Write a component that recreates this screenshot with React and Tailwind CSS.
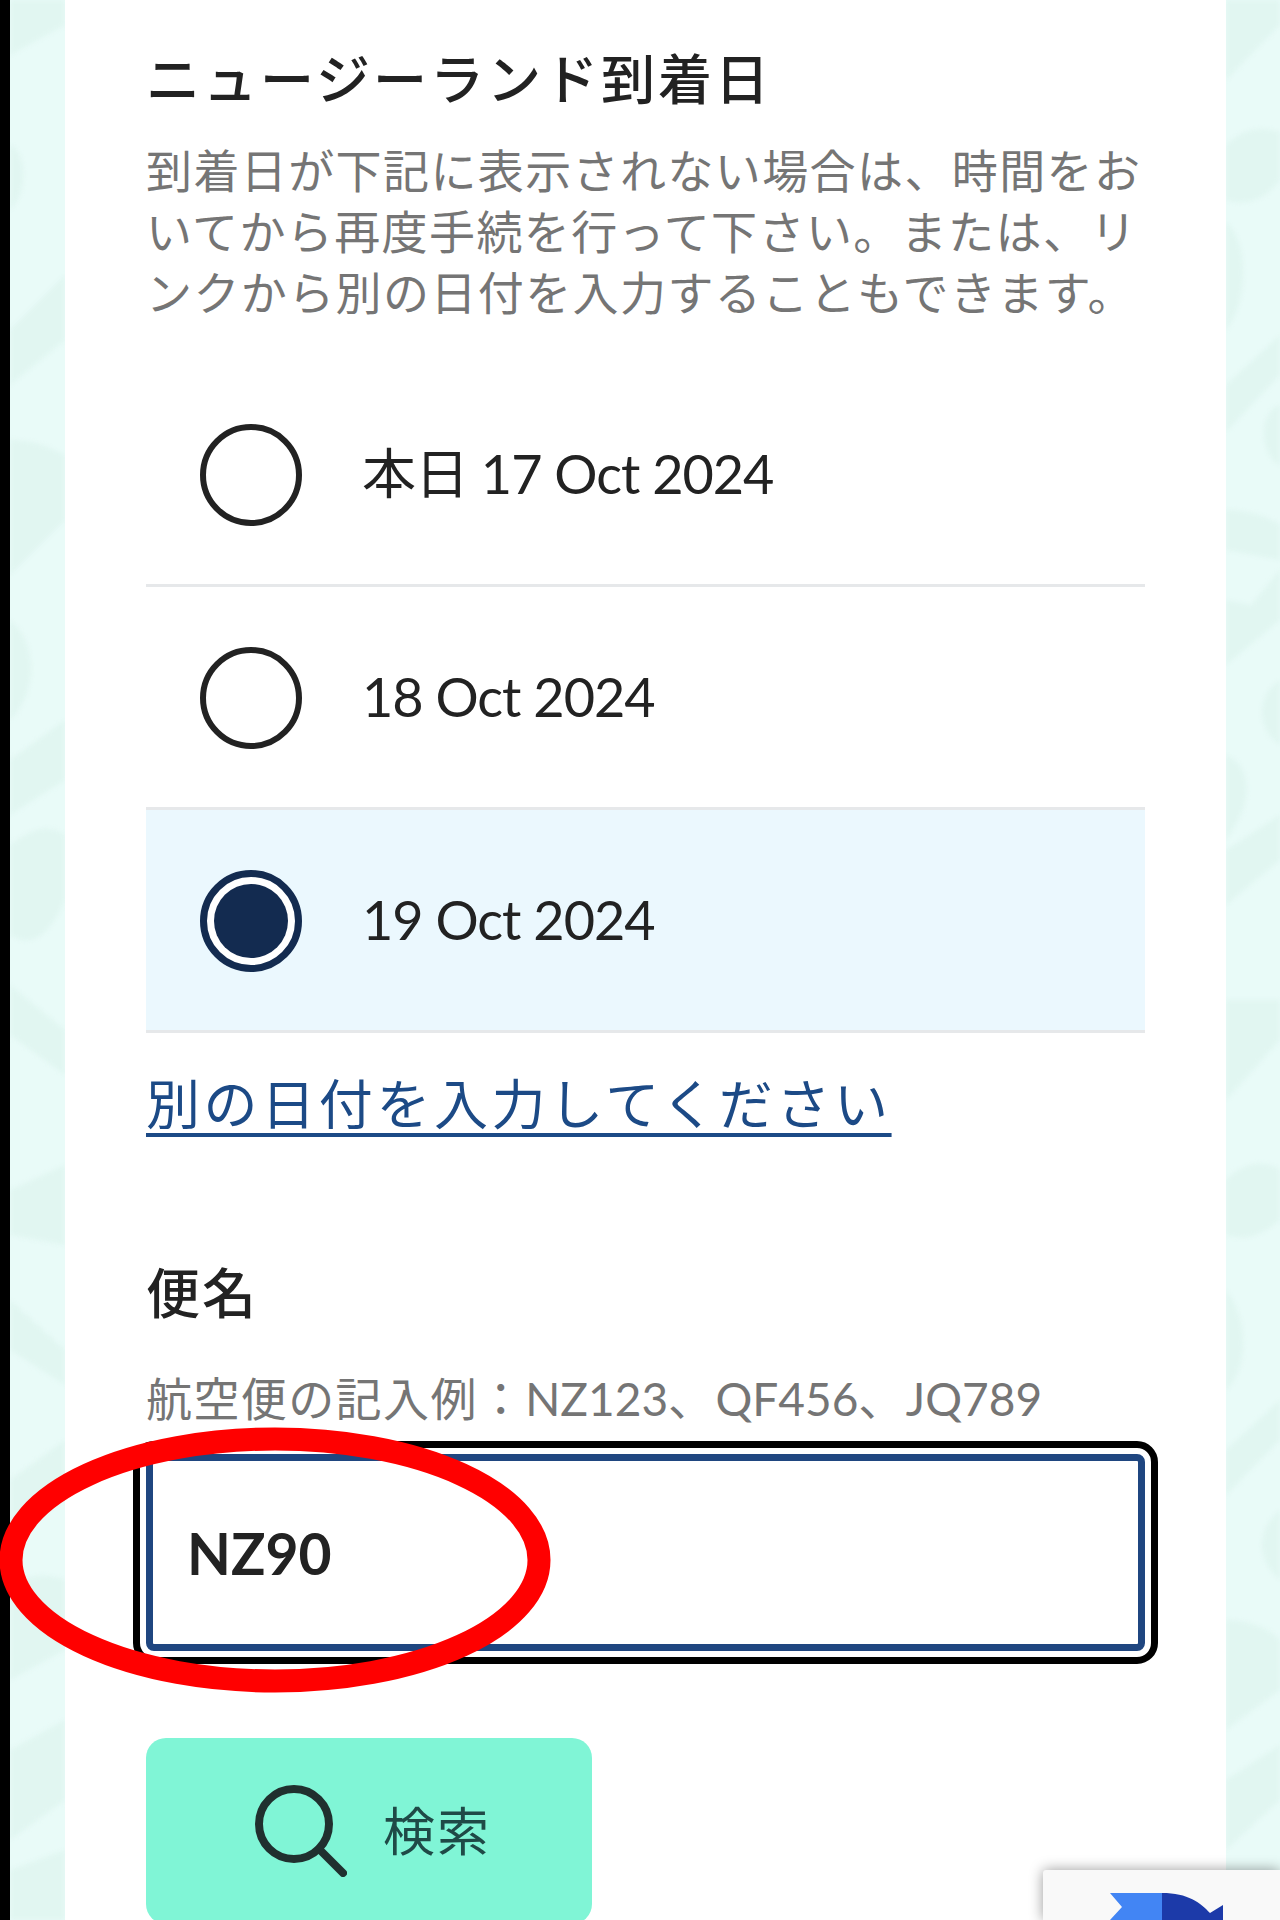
import React from 'react';

const FONT = "[font-family:Lato,'Noto_Sans_CJK_JP',sans-serif]";

const dates = [
    { id: 'today', label: '本日 17 Oct 2024' },
    { id: 'tomorrow', label: '18 Oct 2024' },
    { id: 'after', label: '19 Oct 2024', selected: true },
];

const Strip = ({ className, shapes }) => (
    <div className={`relative shrink-0 overflow-hidden bg-[#e9fbf8] ${className}`}>
        <svg className="absolute inset-0 h-full w-full blur-[2px]" viewBox="0 0 54 1920" preserveAspectRatio="none" fill="#e1f6f1">
            {shapes.map((d, i) => <path key={i} d={d} />)}
        </svg>
    </div>
);

const rightShapes = [
    'M0 0H54V25L0 80Z',
    'M0 145C20 125 40 128 54 132V180C35 205 15 205 0 200Z',
    'M0 222C22 240 24 300 0 330Z',
    'M0 385L54 335V375L0 432Z',
    'M54 405C35 410 30 450 54 466Z',
    'M0 510C25 510 45 518 54 525V570L25 605L0 600L0 665L54 620V560L0 550Z',
    'M54 680C30 695 30 730 54 745Z',
    'M0 755C25 765 30 800 0 840Z',
    'M0 850L54 815V860L0 905Z',
    'M0 1000H54V1040L0 1100Z',
    'M0 1180C20 1160 40 1160 54 1170V1220C30 1240 15 1240 0 1235Z',
    'M0 1290C24 1320 22 1370 0 1390Z',
    'M0 1450L54 1400V1440L0 1495Z',
    'M54 1510C30 1530 30 1560 54 1580Z',
    'M0 1620C25 1620 45 1630 54 1640V1690L0 1730Z',
    'M0 1780L54 1745V1800L0 1850Z',
];

const leftShapes = [
    'M0 0H54V25L0 55Z',
    'M0 145C15 150 20 190 0 210Z',
    'M0 330L54 275V340L0 385Z',
    'M0 440C20 440 35 445 54 455V520L0 575Z',
    'M0 620C25 640 30 690 0 720Z',
    'M0 760L54 720V780L0 815Z',
    'M0 845C25 825 40 825 54 835V900C35 945 15 945 0 935Z',
    'M0 985L54 1030V1075L0 1035Z',
    'M0 1190L54 1165V1245L0 1235Z',
    'M0 1300L54 1350V1385L0 1350Z',
    'M0 1480L54 1440V1500L0 1530Z',
    'M0 1590C20 1570 40 1575 54 1580V1650L0 1680Z',
    'M0 1750L54 1720V1800L0 1840Z',
    'M0 1870L54 1850V1920H0Z',
];

const Radio = ({ selected }) => selected ? (
    <span className="mt-[2px] flex h-[102px] w-[102px] shrink-0 items-center justify-center rounded-full border-[7px] border-[#132b50] bg-white">
        <span className="h-[74px] w-[74px] rounded-full bg-[#132b50]" />
    </span>
) : (
    <span className="mt-[2px] h-[102px] w-[102px] shrink-0 rounded-full border-[6px] border-[#222]" />
);

const DateRow = ({ label, selected }) => (
    <div className={`flex h-[223px] items-center gap-[60px] border-b-[3px] border-[#e6e8ea] pl-[54px] ${selected ? 'bg-[#ebf8fe]' : ''}`}>
        <Radio selected={selected} />
        <span className="text-[54px] leading-[60px] tracking-[-1px] text-[#222]">{label}</span>
    </div>
);

const App = () => {
    return (
        <div className={`relative flex h-[1920px] w-[1280px] overflow-hidden bg-white ${FONT}`}>
            <div className="w-[10px] shrink-0 bg-black" />
            <Strip className="w-[55px]" shapes={leftShapes} />

            <main className="w-[1161px] shrink-0 pl-[81px] pr-[81px] pt-[50px]">
                <h2 className="whitespace-nowrap text-[54px] font-medium leading-[60px] tracking-[3px] text-[#222]">ニュージーランド到着日</h2>
                <p className="mt-[30px] whitespace-nowrap text-[46px] leading-[61px] tracking-[1.4px] text-[#757575]">
                    到着日が下記に表示されない場合は、時間をお<br />
                    いてから再度手続を行って下さい。または、リ<br />
                    ンクから別の日付を入力することもできます。
                </p>

                <div className="mt-[41px]">
                    {dates.map(d => <DateRow key={d.id} label={d.label} selected={d.selected} />)}
                </div>

                <a className="mt-[42px] block w-fit whitespace-nowrap text-[54px] leading-[60px] tracking-[3.6px] text-[#1c4a86] underline decoration-[4px] underline-offset-[8px]">
                    別の日付を入力してください
                </a>

                <h3 className="mt-[129px] text-[54px] font-medium leading-[60px] tracking-[2px] text-[#222]">便名</h3>
                <p className="mt-[45px] whitespace-nowrap text-[46px] leading-[60px] tracking-[1.4px] text-[#757575]">
                    航空便の記入例：<span className="tracking-normal">NZ123</span>、<span className="tracking-normal">QF456</span>、<span className="tracking-normal">JQ789</span>
                </p>

                <input
                    readOnly
                    value="NZ90"
                    className="mt-[25px] block h-[197px] w-full rounded-[8px] border-[7px] border-[#1f4680] bg-white pl-[34px] text-[57px] font-bold text-[#222] outline-[7px] outline-offset-[6px] outline-black"
                />

                <button className="mt-[87px] flex h-[186px] w-[446px] items-center justify-center gap-[36px] rounded-[20px] bg-[#80f5d6] pl-[8px]">
                    <svg width="92" height="92" viewBox="0 0 92 92" fill="none" stroke="#20302f" strokeWidth="8" strokeLinecap="round">
                        <circle cx="39" cy="39" r="35" />
                        <path d="M64 64L88 88" />
                    </svg>
                    <span className="text-[52px] leading-[60px] tracking-[2px] text-[#1f4a47]">検索</span>
                </button>
            </main>

            <Strip className="w-[54px]" shapes={rightShapes} />

            {/* red marker drawn over the input */}
            <svg className="absolute left-0 top-[1420px]" width="560" height="280" viewBox="0 0 560 280" fill="none">
                <ellipse cx="275" cy="140" rx="264" ry="121" stroke="#ff0000" strokeWidth="23" />
            </svg>

            {/* recaptcha badge, cut off by the page edge */}
            <div className="absolute left-[1043px] top-[1870px] h-[50px] w-[237px] rounded-tl-[3px] bg-[#f9f9f9] shadow-[0_0_14px_rgba(0,0,0,0.4)]">
                <svg className="absolute inset-0" width="237" height="50" viewBox="0 0 237 50">
                    <path d="M67 23H119V50H67L79 37Z" fill="#4285f4" />
                    <path d="M119 23C145 23 158 33 167 43L180 35V50H119Z" fill="#1c3aa9" />
                </svg>
            </div>
        </div>
    );
};

export default App;
